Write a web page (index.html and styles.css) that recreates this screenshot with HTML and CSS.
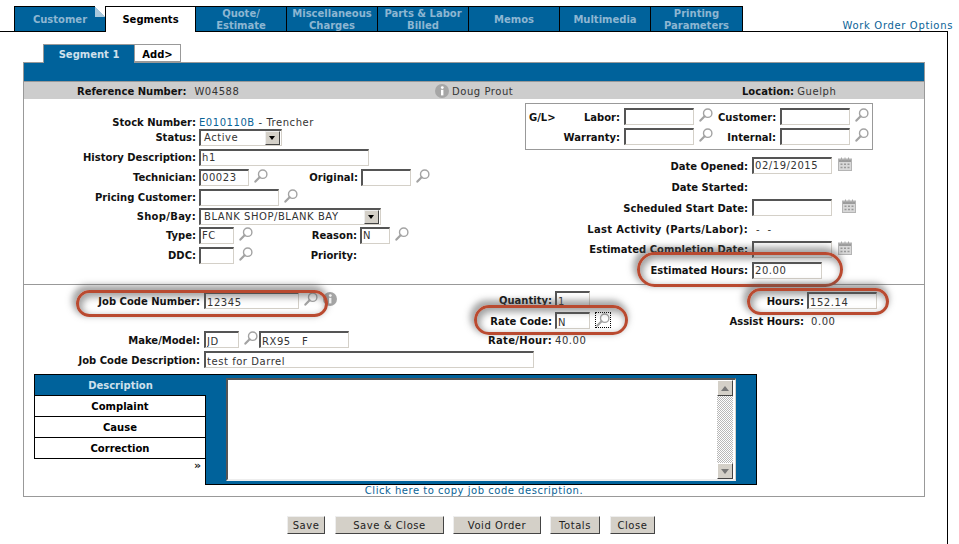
FILE: index.html
```html
<!DOCTYPE html>
<html lang="en">
<head>
<meta charset="utf-8">
<title>Work Order - Segments</title>
<link rel="stylesheet" href="styles.css">
</head>
<body>
<svg class="defs" width="0" height="0" aria-hidden="true">
  <symbol id="mag" viewBox="0 0 14 14">
    <circle cx="8.7" cy="5.2" r="4.2" fill="#fff" stroke="#a3a3a3" stroke-width="1.4"/>
    <path d="M5.6 8.3 1.4 12.6" stroke="#a3a3a3" stroke-width="2.2" stroke-linecap="round"/>
  </symbol>
  <symbol id="cal" viewBox="0 0 14 14">
    <rect x="0.5" y="2" width="13" height="11.5" fill="#d8d8d8" stroke="#b4b4b4"/>
    <rect x="1" y="2.5" width="12" height="2.5" fill="#9c9c9c"/>
    <path d="M3.5 0.5v3M7 0.5v3M10.5 0.5v3" stroke="#a8a8a8"/>
    <path d="M2.5 6.5h2v1.5h-2zM6 6.5h2v1.5h-2zM9.5 6.5h2v1.5h-2zM2.5 9.8h2v1.5h-2zM6 9.8h2v1.5h-2zM9.5 9.8h2v1.5h-2z" fill="#9a9a9a"/>
  </symbol>
  <symbol id="info" viewBox="0 0 14 14">
    <circle cx="7" cy="7" r="7" fill="#a6a6a6"/>
    <rect x="6" y="5.8" width="2.4" height="5.6" fill="#fff"/>
    <circle cx="7.3" cy="3.6" r="1.4" fill="#fff"/>
  </symbol>
</svg>
<div class="page">
  <nav class="strip">
    <a class="tab tab-fold">Customer</a>
    <a class="tab tab-on">Segments</a>
    <a class="tab">Quote/<br>Estimate</a>
    <a class="tab">Miscellaneous<br>Charges</a>
    <a class="tab">Parts &amp; Labor<br>Billed</a>
    <a class="tab">Memos</a>
    <a class="tab">Multimedia</a>
    <a class="tab tab-last">Printing<br>Parameters</a>
    <a class="options">Work Order Options</a>
  </nav>
  <main class="main">
    <div class="subtabs">
      <a class="subtab subtab-on">Segment 1</a>
      <a class="subtab subtab-add">Add&gt;</a>
    </div>
    <section class="panel">
      <div class="bluebar"></div>
      <div class="graybar">
        <span class="gb-ref"><b>Reference Number:</b><span class="val">W04588</span></span>
        <span class="gb-who"><svg class="ico-info"><use href="#info"/></svg><span class="plain">Doug Prout</span></span>
        <span class="gb-loc"><b>Location:</b> <span class="plain">Guelph</span></span>
      </div>
      <div class="top">
        <div class="left">
          <div class="row row-stock"><label class="lab">Stock Number:</label><span class="txt"><a class="link">E010110B</a> - Trencher</span></div>
          <div class="row"><label class="lab">Status:</label><div class="sel w83"><span>Active</span><i class="arrow"></i></div></div>
          <div class="row"><label class="lab">History Description:</label><input class="inp w170" value="h1"></div>
          <div class="row"><label class="lab">Technician:</label><input class="inp w50" value="00023"><svg class="mag"><use href="#mag"/></svg><label class="lab2 l-orig">Original:</label><input class="inp w50"><svg class="mag"><use href="#mag"/></svg></div>
          <div class="row row19"><label class="lab">Pricing Customer:</label><input class="inp w80"><svg class="mag"><use href="#mag"/></svg></div>
          <div class="row row19"><label class="lab wide">Shop/Bay:</label><div class="sel w182"><span>BLANK SHOP/BLANK BAY</span><i class="arrow"></i></div></div>
          <div class="row"><label class="lab">Type:</label><input class="inp w35" value="FC"><svg class="mag"><use href="#mag"/></svg><label class="lab2 l-reas">Reason:</label><input class="inp w30" value="N"><svg class="mag"><use href="#mag"/></svg></div>
          <div class="row"><label class="lab">DDC:</label><input class="inp w35"><svg class="mag"><use href="#mag"/></svg><label class="lab2 l-reas">Priority:</label></div>
        </div>
        <div class="right">
          <div class="gl">
            <div class="gl-row"><b class="gl-tag">G/L&gt;</b><label class="gl-a">Labor:</label><input class="inp w70"><svg class="mag"><use href="#mag"/></svg><label class="gl-b">Customer:</label><input class="inp w70"><svg class="mag"><use href="#mag"/></svg></div>
            <div class="gl-row"><b class="gl-tag"></b><label class="gl-a">Warranty:</label><input class="inp w70"><svg class="mag"><use href="#mag"/></svg><label class="gl-b">Internal:</label><input class="inp w70"><svg class="mag"><use href="#mag"/></svg></div>
          </div>
          <div class="drow"><label class="dlab">Date Opened:</label><input class="inp w80" value="02/19/2015"><svg class="cal"><use href="#cal"/></svg></div>
          <div class="drow"><label class="dlab">Date Started:</label></div>
          <div class="drow"><label class="dlab">Scheduled Start Date:</label><input class="inp w80"><svg class="cal cal-far"><use href="#cal"/></svg></div>
          <div class="drow"><label class="dlab wide">Last Activity (Parts/Labor):</label><span class="txt dash">-&nbsp;&nbsp;-</span></div>
          <div class="drow"><label class="dlab dlab-up">Estimated Completion Date:</label><input class="inp w80"><svg class="cal"><use href="#cal"/></svg></div>
          <div class="drow"><label class="dlab dlab-up">Estimated Hours:</label><input class="inp w70" value="20.00"></div>
        </div>
      </div>
      <div class="job">
        <div class="jrow j1">
          <div class="jc"><label class="jlab">Job Code Number:</label><input class="inp w95" value="12345"><svg class="mag"><use href="#mag"/></svg><svg class="ico-job"><use href="#info"/></svg></div>
          <div class="jc jc-up"><label class="mlab">Quantity:</label><input class="inp w35" value="1"></div>
          <div class="jc"><label class="hlab">Hours:</label><input class="inp w70" value="152.14"></div>
        </div>
        <div class="jrow j2">
          <div class="jc"></div>
          <div class="jc"><label class="mlab">Rate Code:</label><input class="inp w35" value="N"><span class="focusmag"><svg class="mag0"><use href="#mag"/></svg></span></div>
          <div class="jc"><label class="hlab">Assist Hours:</label><span class="txt hval">0.00</span></div>
        </div>
        <div class="jrow j3">
          <div class="jc"><label class="jlab">Make/Model:</label><input class="inp w35" value="JD"><svg class="mag"><use href="#mag"/></svg><input class="inp w90 tight" value="RX95   F"></div>
          <div class="jc"><label class="mlab wide">Rate/Hour:</label><span class="txt mval">40.00</span></div>
          <div class="jc"></div>
        </div>
        <div class="jrow j4">
          <div class="jc jc-wide"><label class="jlab">Job Code Description:</label><input class="inp w330" value="test for Darrel"></div>
        </div>
      </div>
      <div class="desc">
        <div class="dtabs">
          <div class="dtab dtab-on">Description</div>
          <div class="dtab">Complaint</div>
          <div class="dtab">Cause</div>
          <div class="dtab">Correction</div>
          <div class="dmore">»</div>
        </div>
        <div class="dbody">
          <div class="dwrap">
            <textarea class="darea" aria-label="Description"></textarea>
            <div class="sbar"><span class="sbtn"><i class="tri tri-up"></i></span><span class="strack"></span><span class="sbtn"><i class="tri tri-dn"></i></span></div>
          </div>
        </div>
      </div>
      <div class="copy"><a class="link">Click here to copy job code description.</a></div>
    </section>
    <div class="buttons">
      <button class="btn b-save">Save</button>
      <button class="btn b-sc">Save &amp; Close</button>
      <button class="btn b-void">Void Order</button>
      <button class="btn b-tot">Totals</button>
      <button class="btn b-close">Close</button>
    </div>
  </main>
  <div class="oval ov-job"></div>
  <div class="oval ov-est"></div>
  <div class="oval ov-hours"></div>
  <div class="oval ov-rate"></div>
</div>
</body>
</html>
```
FILE: styles.css
```css
* { box-sizing: border-box; }
html, body { margin: 0; padding: 0; background: #fff; }
body { font: 10px/14px "DejaVu Sans", Verdana, sans-serif; color: #222; overflow: hidden; }
.defs { position: absolute; }
.page { position: relative; width: 959px; height: 544px; overflow: hidden; padding-top: 6px; }
b, label { font-weight: bold; color: #111; }
.link, .options { color: #0a6397; }
.plain, .val, .txt { font-weight: normal; letter-spacing: .55px; color: #333; }
.wide { letter-spacing: .3px; }

/* top tabs */
.strip { display: flex; height: 25px; padding-left: 14px; position: relative; z-index: 1; }
.tab { width: 91px; height: 25px; background: #00629b; border: 1px solid #000; border-width: 1px 1px 0 0; color: #8db6d2; font-weight: bold; text-align: center; display: flex; align-items: center; justify-content: center; line-height: 12px; padding-top: 1px; }
.tab:first-child { border-left: 1px solid #000; }
.tab-fold { border-right: 0; position: relative; }
.tab-fold::after { content: ""; position: absolute; top: -1px; right: 0; width: 10px; height: 11px; background: linear-gradient(to top right, #a9c8dc 50%, #fff 50%); }
.tab-on { background: #fff; color: #000; border-left: 1px solid #000; height: 26px; }
.tab-last { width: 92px; }
.options { margin-left: auto; align-self: flex-end; padding-right: 6px; letter-spacing: .65px; line-height: 13px; margin-bottom: -1px; }

.main { width: 948px; height: 513px; border-top: 1px solid #000; border-right: 1px solid #000; padding-top: 12px; }

/* segment tabs */
.subtabs { display: flex; padding-left: 43px; height: 18px; position: relative; z-index: 1; }
.subtab { font-weight: bold; text-align: center; line-height: 20px; border: 1px solid #999; }
.subtab-on { width: 91px; height: 19px; background: #00629b; color: #cfe0ec; border-bottom: 0; border-right: 0; }
.subtab-add { width: 47px; color: #000; background: #fff; }

/* panel */
.panel { margin-left: 23px; width: 902px; height: 435px; border: 1px solid #999; }
.bluebar { height: 19px; background: #00629b; border-bottom: 1px solid #999; }
.graybar { height: 17px; background: #cdcdcd; display: flex; align-items: center; padding-top: 2px; }
.gb-ref { width: 411px; padding-left: 53px; }
.val { margin-left: 8px; }
.gb-who { width: 307px; display: flex; align-items: center; }
.ico-info { width: 14px; height: 14px; margin: -2px 3px 0 0; }
.top { display: flex; height: 186px; border-bottom: 1px solid #999; }

/* left form */
.left { width: 478px; padding-top: 16px; flex: none; }
.row { display: flex; align-items: flex-start; height: 20px; }
.row-stock { height: 14px; line-height: 16px; }
.row19 { height: 19px; }
.lab { width: 172px; margin-right: 3px; text-align: right; line-height: 18px; flex: none; }
.row-stock .lab { line-height: 16px; }
.lab2 { text-align: right; line-height: 18px; flex: none; margin-right: 3px; }
.l-orig { width: 90px; }
.l-reas { width: 104px; }
.inp { height: 17px; border: 1px solid #d4d0c8; border-top: 2px solid #555; border-left: 2px solid #555; background: #fff; padding: 0 0 1px 1px; font: 10px "DejaVu Sans", Verdana, sans-serif; color: #333; letter-spacing: .55px; flex: none; outline: 0; }
.w30 { width: 30px; } .w35 { width: 35px; } .w50 { width: 50px; } .w70 { width: 70px; }
.w80 { width: 80px; } .w90 { width: 90px; } .w95 { width: 95px; } .w170 { width: 170px; } .w330 { width: 330px; }
.mag { width: 14px; height: 14px; margin: 0 0 0 5px; flex: none; }
.mag0 { width: 14px; height: 14px; display: block; }
.sel { height: 17px; display: flex; align-items: center; justify-content: space-between; border: 2px solid #555; border-right: 1px solid #d4d0c8; border-bottom: 1px solid #d4d0c8; padding: 0 1px 0 3px; color: #333; background: #fff; letter-spacing: .55px; flex: none; }
.w83 { width: 83px; } .w182 { width: 182px; }
.arrow { width: 15px; height: 14px; background: #d4d0c8; border: 1px solid; border-color: #eee #444 #444 #eee; position: relative; flex: none; }
.arrow::after { content: ""; position: absolute; left: 3px; top: 4px; border: 3.5px solid transparent; border-top: 4px solid #000; border-bottom: 0; }

/* right form */
.right { flex: 1; padding-top: 4px; }
.gl { margin-left: 23px; width: 348px; height: 47px; border: 1px solid #999; margin-bottom: 7px; padding-top: 4px; }
.gl-row { display: flex; align-items: flex-start; height: 20px; }
.gl-row label { line-height: 20px; text-align: right; flex: none; margin-right: 4px; }
.gl-row .gl-tag { width: 0; padding: 0; line-height: 20px; flex: none; color: #111; }
.gl-row:first-child .gl-tag { width: 49px; padding-left: 3px; }
.gl-row:first-child .gl-a { width: 45px; }
.gl-row:last-child .gl-a { width: 94px; }
.gl-row .gl-b { width: 58px; margin-left: 5px; }
.drow { display: flex; align-items: flex-start; height: 21px; }
.dlab { width: 246px; margin-right: 4px; text-align: right; line-height: 20px; flex: none; white-space: nowrap; }
.dlab-up { line-height: 18px; }
.cal { width: 14px; height: 14px; margin-left: 6px; flex: none; }
.cal-far { margin-left: 10px; }
.dash { line-height: 20px; margin-left: 4px; }

/* job section */
.job { padding-top: 7px; height: 89px; }
.job .inp { padding: 2px 0 0 1px; }
.jrow { display: grid; grid-template-columns: 448px 228px 1fr; }
.j1, .j3, .j4 { height: 20px; }
.j2 { height: 19px; }
.jc { display: flex; align-items: flex-start; }
.jc-up { margin-top: -1px; }
.jc-wide { grid-column: 1 / -1; }
.jlab { width: 176px; margin-right: 4px; text-align: right; line-height: 20px; flex: none; }
.mlab { width: 80px; margin-right: 3px; text-align: right; line-height: 20px; flex: none; }
.hlab { width: 104px; margin-right: 3px; text-align: right; line-height: 20px; flex: none; }
.hval { line-height: 20px; margin-left: 4px; }
.mval { line-height: 20px; }
.ico-job { width: 14px; height: 14px; margin-left: 5px; flex: none; }
.tight { margin-left: 1px; white-space: pre; }
.focusmag { width: 16px; height: 16px; margin-left: 5px; border: 1px dotted #000; flex: none; }

/* description */
.desc { display: flex; margin-left: 10px; width: 723px; height: 111px; }
.dtabs { width: 172px; flex: none; display: flex; flex-direction: column; }
.dtab { height: 21px; border: 1px solid #000; border-top: 0; font-weight: bold; text-align: center; line-height: 22px; color: #000; background: #fff; }
.dtab-on { background: #00629b; color: #cfe0ec; border-top: 1px solid #000; border-right: 0; height: 22px; line-height: 21px; }
.dmore { flex: 1; border-right: 1px solid #000; text-align: right; padding-right: 4px; line-height: 14px; font-size: 11px; font-weight: bold; }
.dbody { flex: 1; background: #00629b; border: 1px solid #000; border-left: 0; padding: 3px 20px 3px 20px; }
.dwrap { display: flex; height: 103px; width: 510px; border: 2px solid #555; border-right: 1px solid #d4d0c8; border-bottom: 2px solid #eee; background: #fff; padding-right: 2px; }
.darea { flex: 1; border: 0; resize: none; outline: 0; padding: 0; display: block; overflow: hidden; }
.sbar { width: 16px; display: flex; flex-direction: column; flex: none; }
.sbtn { height: 16px; background: #d4d0c8; border: 1px solid; border-color: #fff #444 #444 #fff; display: flex; align-items: center; justify-content: center; flex: none; }
.strack { flex: 1; background: repeating-conic-gradient(#b8b8b8 0 25%, #fff 0 50%) 0 0 / 2px 2px; }
.tri { border: 4px solid transparent; display: block; }
.tri-up { border-bottom: 5px solid #777; border-top: 0; }
.tri-dn { border-top: 5px solid #777; border-bottom: 0; }
.copy { text-align: center; line-height: 12px; letter-spacing: .52px; }

/* buttons */
.buttons { display: flex; margin: 19px 0 0 287px; }
.btn { height: 18px; padding: 0; background: #d4d0c8; border: 1px solid; border-color: #eee #444 #444 #eee; font: 10px "DejaVu Sans", Verdana, sans-serif; color: #222; letter-spacing: .55px; flex: none; }
.b-save { width: 38px; margin-right: 10px; }
.b-sc { width: 109px; margin-right: 9px; }
.b-void { width: 88px; margin-right: 9px; }
.b-tot { width: 50px; margin-right: 10px; }
.b-close { width: 45px; }

/* annotation ovals */
.oval { position: absolute; z-index: 5; pointer-events: none; border: 3px solid #b94a30; box-shadow: -2px -3px 6px 2px rgba(80,80,80,.5), inset 2px 3px 7px 1px rgba(80,80,80,.55); }
.ov-job { left: 76px; top: 290px; width: 252px; height: 27px; border-radius: 14px; }
.ov-est { left: 637px; top: 252px; width: 206px; height: 35px; border-radius: 18px; }
.ov-hours { left: 747px; top: 288px; width: 142px; height: 27px; border-radius: 14px; }
.ov-rate { left: 474px; top: 305px; width: 154px; height: 30px; border-radius: 15px; }
```
